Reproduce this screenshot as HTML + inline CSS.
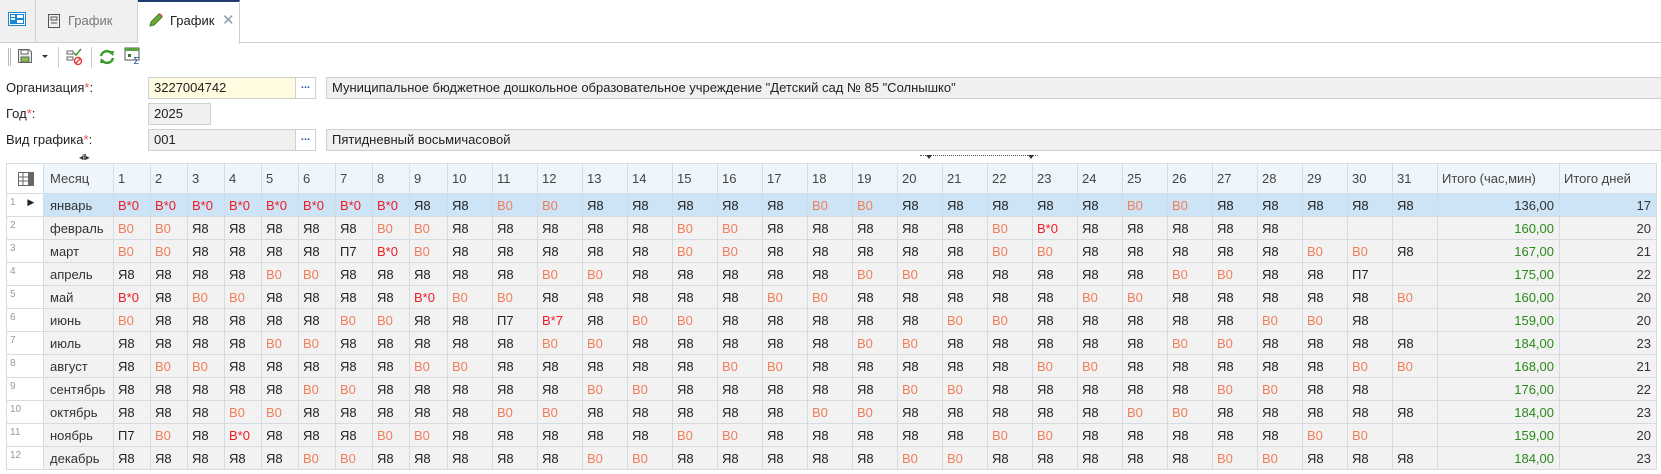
<!DOCTYPE html>
<html><head><meta charset="utf-8">
<style>
*{box-sizing:border-box;margin:0;padding:0}
body{width:1661px;height:474px;overflow:hidden;background:#fff;font-family:"Liberation Sans","DejaVu Sans",sans-serif;font-size:13px;color:#222;position:relative}
.a{position:absolute}
.tabbar{left:0;top:0;width:1661px;height:43px;border-bottom:1px solid #cfcfcf}
.tab{top:0;height:43px;background:#f0f0f0;border-right:1px solid #cfcfcf;border-bottom:1px solid #cfcfcf}
.lbl{left:6px;font-size:13px;color:#222}
.req{color:#e05555}
.inp{height:22px;border:1px solid #cfcfcf;padding-left:5px;line-height:20px;font-size:13px}
.btn{width:20px;height:22px;border:1px solid #cfcfcf;border-left:none;background:#fff;color:#2b5fb0;text-align:center;line-height:14px;font-weight:bold;font-size:11px}
table{position:absolute;left:6px;top:163px;border-collapse:collapse;table-layout:fixed;width:1651px}
td,th{border:1px solid #d4dbe3;height:23px;padding:0 0 0 4px;white-space:nowrap;overflow:hidden;font-weight:normal;text-align:left;background:#f2f2f2;font-size:13px}
th{height:30px;background:#eef6fb;color:#444}
th.g{background:#fff}
td.g{background:#fff;color:#999;font-size:10px;vertical-align:top;padding-top:3px;padding-left:3px;border-right-color:#d4dbe3}
tr.s td{background:#cde4f6}
tr.s td.g{background:#fff}
.o{color:#f07e5a}
.r{color:#ee1c24}
td.t{text-align:right;padding-right:5px;color:#2a8a1a}
td.d{text-align:right;padding-right:5px;color:#333}
tr.s td.t{color:#333}
td.m{padding-left:6px;color:#333}
</style></head><body>
<div class="a tabbar"></div>
<div class="a tab" style="left:0;width:36px"></div>
<svg class="a" style="left:8px;top:12px" width="18" height="14"><rect x="0.5" y="0.5" width="17" height="13" fill="#fff" stroke="#1b86d4"/><rect x="2" y="2" width="14" height="10" fill="#1b86d4"/><rect x="3" y="3" width="4" height="2" fill="#fff"/><rect x="3" y="6" width="4" height="2" fill="#fff"/><rect x="9" y="3" width="6" height="3" fill="#fff"/><rect x="9" y="8" width="6" height="3" fill="#fff"/></svg>
<div class="a tab" style="left:36px;width:102px"></div>
<svg class="a" style="left:47px;top:13px" width="14" height="16"><rect x="1.5" y="1.5" width="11" height="13" fill="none" stroke="#555"/><rect x="4" y="4" width="6" height="3" fill="none" stroke="#555"/><line x1="4" y1="10" x2="10" y2="10" stroke="#555"/></svg>
<div class="a" style="left:68px;top:13px;color:#777">График</div>
<div class="a" style="left:138px;top:0;width:102px;height:44px;background:#fff;border-top:2px solid #1f3a6e;border-right:1px solid #cfcfcf"></div>
<svg class="a" style="left:148px;top:12px" width="16" height="16"><path d="M2 14 L3 10 L11 2 L14 5 L6 13 Z" fill="#6cad3a" stroke="#3f7a1f"/><path d="M11 2 L14 5 L15 4 L12 1 Z" fill="#e06060"/></svg>
<div class="a" style="left:170px;top:13px;color:#222">График</div>
<div class="a" style="left:222px;top:11px;color:#8a9bb0;font-size:15px">✕</div>

<!-- toolbar -->
<div class="a" style="left:8px;top:48px;width:1px;height:18px;background:#bbb"></div>
<div class="a" style="left:10px;top:48px;width:1px;height:18px;background:#bbb"></div>
<svg class="a" style="left:17px;top:48px" width="16" height="16"><path d="M1.5 1.5 H12 L14.5 4 V14.5 H1.5 Z" fill="#eee" stroke="#666"/><rect x="4" y="2" width="7" height="4" fill="#fff" stroke="#666"/><rect x="4" y="9" width="8" height="5" fill="#7fbf4a" stroke="#666"/></svg>
<div class="a" style="left:42px;top:55px;border-left:3px solid transparent;border-right:3px solid transparent;border-top:3px solid #333"></div>
<div class="a" style="left:58px;top:47px;width:1px;height:21px;background:#ccc"></div>
<svg class="a" style="left:66px;top:48px" width="18" height="18"><rect x="1" y="3" width="6" height="3" fill="none" stroke="#666"/><rect x="1" y="9" width="6" height="3" fill="none" stroke="#666"/><path d="M8 5 L10 7 L15 1" fill="none" stroke="#3a9a3a" stroke-width="1.5"/><circle cx="12" cy="13" r="3.5" fill="none" stroke="#e03a3a" stroke-width="1.4"/><line x1="9.5" y1="15.5" x2="14.5" y2="10.5" stroke="#e03a3a" stroke-width="1.4"/></svg>
<div class="a" style="left:91px;top:47px;width:1px;height:21px;background:#ccc"></div>
<svg class="a" style="left:99px;top:49px" width="16" height="16"><path d="M2 7 A6 6 0 0 1 13 5" fill="none" stroke="#3a9a2a" stroke-width="2.5"/><path d="M14 9 A6 6 0 0 1 3 11" fill="none" stroke="#3a9a2a" stroke-width="2.5"/><path d="M10 2 L15 2 L14 7 Z" fill="#3a9a2a"/><path d="M6 14 L1 14 L2 9 Z" fill="#3a9a2a"/></svg>
<svg class="a" style="left:124px;top:47px" width="18" height="18"><rect x="1" y="1" width="14" height="12" fill="#fff" stroke="#555"/><rect x="1" y="1" width="14" height="3" fill="#5aa23a"/><rect x="4" y="7" width="3" height="3" fill="#3a7a2a"/><text x="9" y="17" font-size="10" fill="#2b5fb0" font-family="DejaVu Sans">Σ</text></svg>

<!-- form -->
<div class="a lbl" style="top:80px">Организация<span class="req">*</span>:</div>
<div class="a inp" style="left:148px;top:77px;width:148px;background:#fffbe0">3227004742</div>
<div class="a btn" style="left:296px;top:77px">...</div>
<div class="a inp" style="left:326px;top:77px;width:1340px;background:#f0f0f0">Муниципальное бюджетное дошкольное образовательное учреждение "Детский сад № 85 "Солнышко"</div>
<div class="a lbl" style="top:106px">Год<span class="req">*</span>:</div>
<div class="a inp" style="left:148px;top:103px;width:63px;background:#f0f0f0">2025</div>
<div class="a lbl" style="top:132px">Вид графика<span class="req">*</span>:</div>
<div class="a inp" style="left:148px;top:129px;width:148px;background:#f0f0f0">001</div>
<div class="a btn" style="left:296px;top:129px">...</div>
<div class="a inp" style="left:326px;top:129px;width:1340px;background:#f0f0f0">Пятидневный восьмичасовой</div>
<div class="a" style="left:79px;top:153px;font-size:8px;color:#333;letter-spacing:-1px">◂III▸</div>
<div class="a" style="left:920px;top:155px;width:118px;border-top:1px dotted #555"></div>
<div class="a" style="left:926px;top:155px;border-left:3px solid transparent;border-right:3px solid transparent;border-top:4px solid #333"></div>
<div class="a" style="left:1028px;top:155px;border-left:3px solid transparent;border-right:3px solid transparent;border-top:4px solid #333"></div>

<table>
<colgroup><col style="width:37px"><col style="width:70px">
<col style="width:37px"><col style="width:37px"><col style="width:37px"><col style="width:37px"><col style="width:37px"><col style="width:37px"><col style="width:37px"><col style="width:37px"><col style="width:38px">
<col style="width:45px"><col style="width:45px"><col style="width:45px"><col style="width:45px"><col style="width:45px"><col style="width:45px"><col style="width:45px"><col style="width:45px"><col style="width:45px"><col style="width:45px"><col style="width:45px"><col style="width:45px"><col style="width:45px"><col style="width:45px"><col style="width:45px"><col style="width:45px"><col style="width:45px"><col style="width:45px"><col style="width:45px"><col style="width:45px"><col style="width:45px"><col style="width:45px">
<col style="width:122px"><col style="width:97px"></colgroup>
<tr><th class="g"><svg width="16" height="14" style="margin-left:7px;vertical-align:middle"><rect x="0.5" y="0.5" width="15" height="13" fill="none" stroke="#666"/><line x1="0" y1="5" x2="16" y2="5" stroke="#666"/><line x1="0" y1="9" x2="16" y2="9" stroke="#666"/><line x1="5" y1="0" x2="5" y2="14" stroke="#666"/><rect x="10" y="0" width="6" height="14" fill="#666"/></svg></th><th style="padding-left:6px">Месяц</th><th>1</th><th>2</th><th>3</th><th>4</th><th>5</th><th>6</th><th>7</th><th>8</th><th>9</th><th>10</th><th>11</th><th>12</th><th>13</th><th>14</th><th>15</th><th>16</th><th>17</th><th>18</th><th>19</th><th>20</th><th>21</th><th>22</th><th>23</th><th>24</th><th>25</th><th>26</th><th>27</th><th>28</th><th>29</th><th>30</th><th>31</th><th>Итого (час,мин)</th><th>Итого дней</th></tr>
<tr class="s"><td class="g">1 <span style="color:#222;font-size:9px;margin-left:9px">▶</span></td><td class="m">январь</td><td class="r">В*0</td><td class="r">В*0</td><td class="r">В*0</td><td class="r">В*0</td><td class="r">В*0</td><td class="r">В*0</td><td class="r">В*0</td><td class="r">В*0</td><td>Я8</td><td>Я8</td><td class="o">В0</td><td class="o">В0</td><td>Я8</td><td>Я8</td><td>Я8</td><td>Я8</td><td>Я8</td><td class="o">В0</td><td class="o">В0</td><td>Я8</td><td>Я8</td><td>Я8</td><td>Я8</td><td>Я8</td><td class="o">В0</td><td class="o">В0</td><td>Я8</td><td>Я8</td><td>Я8</td><td>Я8</td><td>Я8</td><td class="t">136,00</td><td class="d">17</td></tr>
<tr><td class="g">2</td><td class="m">февраль</td><td class="o">В0</td><td class="o">В0</td><td>Я8</td><td>Я8</td><td>Я8</td><td>Я8</td><td>Я8</td><td class="o">В0</td><td class="o">В0</td><td>Я8</td><td>Я8</td><td>Я8</td><td>Я8</td><td>Я8</td><td class="o">В0</td><td class="o">В0</td><td>Я8</td><td>Я8</td><td>Я8</td><td>Я8</td><td>Я8</td><td class="o">В0</td><td class="r">В*0</td><td>Я8</td><td>Я8</td><td>Я8</td><td>Я8</td><td>Я8</td><td></td><td></td><td></td><td class="t">160,00</td><td class="d">20</td></tr>
<tr><td class="g">3</td><td class="m">март</td><td class="o">В0</td><td class="o">В0</td><td>Я8</td><td>Я8</td><td>Я8</td><td>Я8</td><td>П7</td><td class="r">В*0</td><td class="o">В0</td><td>Я8</td><td>Я8</td><td>Я8</td><td>Я8</td><td>Я8</td><td class="o">В0</td><td class="o">В0</td><td>Я8</td><td>Я8</td><td>Я8</td><td>Я8</td><td>Я8</td><td class="o">В0</td><td class="o">В0</td><td>Я8</td><td>Я8</td><td>Я8</td><td>Я8</td><td>Я8</td><td class="o">В0</td><td class="o">В0</td><td>Я8</td><td class="t">167,00</td><td class="d">21</td></tr>
<tr><td class="g">4</td><td class="m">апрель</td><td>Я8</td><td>Я8</td><td>Я8</td><td>Я8</td><td class="o">В0</td><td class="o">В0</td><td>Я8</td><td>Я8</td><td>Я8</td><td>Я8</td><td>Я8</td><td class="o">В0</td><td class="o">В0</td><td>Я8</td><td>Я8</td><td>Я8</td><td>Я8</td><td>Я8</td><td class="o">В0</td><td class="o">В0</td><td>Я8</td><td>Я8</td><td>Я8</td><td>Я8</td><td>Я8</td><td class="o">В0</td><td class="o">В0</td><td>Я8</td><td>Я8</td><td>П7</td><td></td><td class="t">175,00</td><td class="d">22</td></tr>
<tr><td class="g">5</td><td class="m">май</td><td class="r">В*0</td><td>Я8</td><td class="o">В0</td><td class="o">В0</td><td>Я8</td><td>Я8</td><td>Я8</td><td>Я8</td><td class="r">В*0</td><td class="o">В0</td><td class="o">В0</td><td>Я8</td><td>Я8</td><td>Я8</td><td>Я8</td><td>Я8</td><td class="o">В0</td><td class="o">В0</td><td>Я8</td><td>Я8</td><td>Я8</td><td>Я8</td><td>Я8</td><td class="o">В0</td><td class="o">В0</td><td>Я8</td><td>Я8</td><td>Я8</td><td>Я8</td><td>Я8</td><td class="o">В0</td><td class="t">160,00</td><td class="d">20</td></tr>
<tr><td class="g">6</td><td class="m">июнь</td><td class="o">В0</td><td>Я8</td><td>Я8</td><td>Я8</td><td>Я8</td><td>Я8</td><td class="o">В0</td><td class="o">В0</td><td>Я8</td><td>Я8</td><td>П7</td><td class="r">В*7</td><td>Я8</td><td class="o">В0</td><td class="o">В0</td><td>Я8</td><td>Я8</td><td>Я8</td><td>Я8</td><td>Я8</td><td class="o">В0</td><td class="o">В0</td><td>Я8</td><td>Я8</td><td>Я8</td><td>Я8</td><td>Я8</td><td class="o">В0</td><td class="o">В0</td><td>Я8</td><td></td><td class="t">159,00</td><td class="d">20</td></tr>
<tr><td class="g">7</td><td class="m">июль</td><td>Я8</td><td>Я8</td><td>Я8</td><td>Я8</td><td class="o">В0</td><td class="o">В0</td><td>Я8</td><td>Я8</td><td>Я8</td><td>Я8</td><td>Я8</td><td class="o">В0</td><td class="o">В0</td><td>Я8</td><td>Я8</td><td>Я8</td><td>Я8</td><td>Я8</td><td class="o">В0</td><td class="o">В0</td><td>Я8</td><td>Я8</td><td>Я8</td><td>Я8</td><td>Я8</td><td class="o">В0</td><td class="o">В0</td><td>Я8</td><td>Я8</td><td>Я8</td><td>Я8</td><td class="t">184,00</td><td class="d">23</td></tr>
<tr><td class="g">8</td><td class="m">август</td><td>Я8</td><td class="o">В0</td><td class="o">В0</td><td>Я8</td><td>Я8</td><td>Я8</td><td>Я8</td><td>Я8</td><td class="o">В0</td><td class="o">В0</td><td>Я8</td><td>Я8</td><td>Я8</td><td>Я8</td><td>Я8</td><td class="o">В0</td><td class="o">В0</td><td>Я8</td><td>Я8</td><td>Я8</td><td>Я8</td><td>Я8</td><td class="o">В0</td><td class="o">В0</td><td>Я8</td><td>Я8</td><td>Я8</td><td>Я8</td><td>Я8</td><td class="o">В0</td><td class="o">В0</td><td class="t">168,00</td><td class="d">21</td></tr>
<tr><td class="g">9</td><td class="m">сентябрь</td><td>Я8</td><td>Я8</td><td>Я8</td><td>Я8</td><td>Я8</td><td class="o">В0</td><td class="o">В0</td><td>Я8</td><td>Я8</td><td>Я8</td><td>Я8</td><td>Я8</td><td class="o">В0</td><td class="o">В0</td><td>Я8</td><td>Я8</td><td>Я8</td><td>Я8</td><td>Я8</td><td class="o">В0</td><td class="o">В0</td><td>Я8</td><td>Я8</td><td>Я8</td><td>Я8</td><td>Я8</td><td class="o">В0</td><td class="o">В0</td><td>Я8</td><td>Я8</td><td></td><td class="t">176,00</td><td class="d">22</td></tr>
<tr><td class="g">10</td><td class="m">октябрь</td><td>Я8</td><td>Я8</td><td>Я8</td><td class="o">В0</td><td class="o">В0</td><td>Я8</td><td>Я8</td><td>Я8</td><td>Я8</td><td>Я8</td><td class="o">В0</td><td class="o">В0</td><td>Я8</td><td>Я8</td><td>Я8</td><td>Я8</td><td>Я8</td><td class="o">В0</td><td class="o">В0</td><td>Я8</td><td>Я8</td><td>Я8</td><td>Я8</td><td>Я8</td><td class="o">В0</td><td class="o">В0</td><td>Я8</td><td>Я8</td><td>Я8</td><td>Я8</td><td>Я8</td><td class="t">184,00</td><td class="d">23</td></tr>
<tr><td class="g">11</td><td class="m">ноябрь</td><td>П7</td><td class="o">В0</td><td>Я8</td><td class="r">В*0</td><td>Я8</td><td>Я8</td><td>Я8</td><td class="o">В0</td><td class="o">В0</td><td>Я8</td><td>Я8</td><td>Я8</td><td>Я8</td><td>Я8</td><td class="o">В0</td><td class="o">В0</td><td>Я8</td><td>Я8</td><td>Я8</td><td>Я8</td><td>Я8</td><td class="o">В0</td><td class="o">В0</td><td>Я8</td><td>Я8</td><td>Я8</td><td>Я8</td><td>Я8</td><td class="o">В0</td><td class="o">В0</td><td></td><td class="t">159,00</td><td class="d">20</td></tr>
<tr><td class="g">12</td><td class="m">декабрь</td><td>Я8</td><td>Я8</td><td>Я8</td><td>Я8</td><td>Я8</td><td class="o">В0</td><td class="o">В0</td><td>Я8</td><td>Я8</td><td>Я8</td><td>Я8</td><td>Я8</td><td class="o">В0</td><td class="o">В0</td><td>Я8</td><td>Я8</td><td>Я8</td><td>Я8</td><td>Я8</td><td class="o">В0</td><td class="o">В0</td><td>Я8</td><td>Я8</td><td>Я8</td><td>Я8</td><td>Я8</td><td class="o">В0</td><td class="o">В0</td><td>Я8</td><td>Я8</td><td>Я8</td><td class="t">184,00</td><td class="d">23</td></tr>
</table>
</body></html>
